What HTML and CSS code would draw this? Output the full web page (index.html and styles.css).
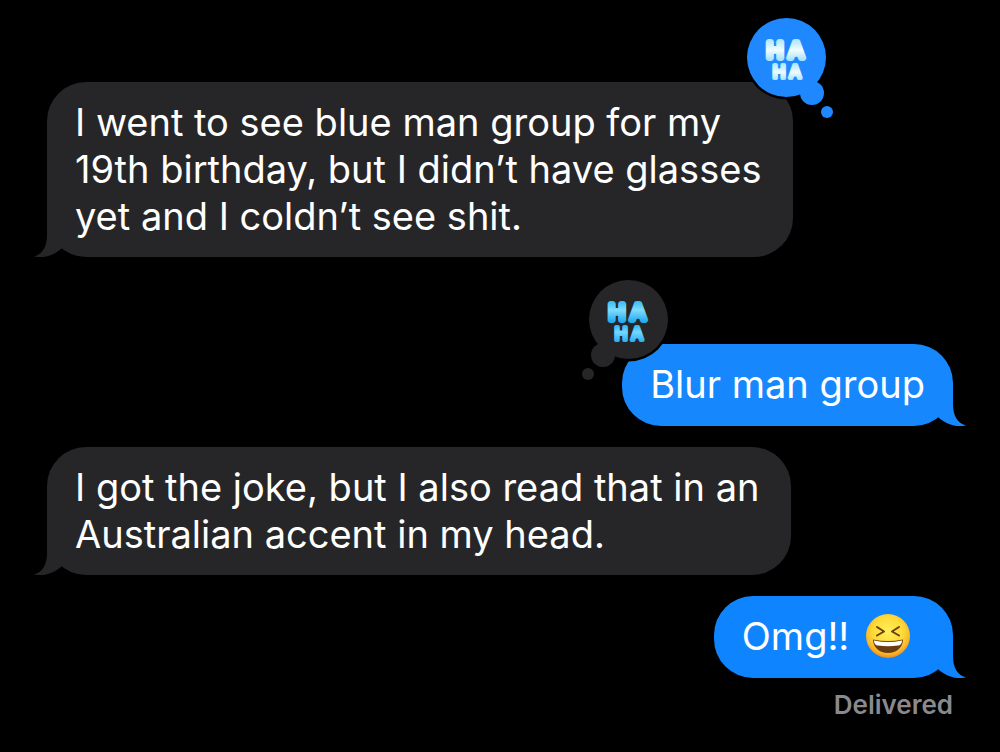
FILE: index.html
```html
<!DOCTYPE html>
<html lang="en">

<head>
  <meta charset="UTF-8">
  <meta name="viewport" content="width=device-width, initial-scale=1">
  <title>Messages</title>
  <link rel="stylesheet" href="styles.css">
</head>

<body>
  <main class="thread">
    <div class="message incoming">
      <p class="text">I went to see blue man group for my<br>19th birthday, but I didn’t have glasses<br>yet and I coldn’t see shit.</p>
      <svg class="tail" viewBox="0 0 28 39" aria-hidden="true">
        <path d="M13 0V17C13 28 9 36 0 38.5C10 40.500 20 37.500 28 30V0Z" />
      </svg>
      <svg class="reaction reaction-right" viewBox="0 0 92 106" role="img" aria-label="Ha ha">
        <defs>
          <linearGradient id="pale" gradientUnits="userSpaceOnUse" x1="0" y1="22" x2="0" y2="66">
            <stop offset="0" stop-color="#9fe0fb" />
            <stop offset="0.3" stop-color="#f2fcff" />
            <stop offset="0.52" stop-color="#a5e2fa" />
            <stop offset="0.58" stop-color="#a5e2fa" />
            <stop offset="0.8" stop-color="#effbff" />
            <stop offset="1" stop-color="#9fe0fb" />
          </linearGradient>
        </defs>
        <circle class="ring" cx="42.5" cy="42.5" r="42" />
        <g class="cloud-blue">
          <circle cx="42.5" cy="42.5" r="39.5" />
          <circle cx="68" cy="78" r="12" />
          <circle cx="83" cy="97" r="6" />
        </g>
        <text class="haha" fill="url(#pale)" stroke="url(#pale)"><tspan class="ha-big" x="31 52" y="43">HA</tspan><tspan class="ha-small" x="35 51" y="63">HA</tspan></text>
      </svg>
    </div>

    <div class="message outgoing spaced">
      <p class="text">Blur man group</p>
      <svg class="tail" viewBox="0 0 28 39" aria-hidden="true">
        <path d="M13 0V17C13 28 9 36 0 38.5C10 40.500 20 37.500 28 30V0Z" />
      </svg>
      <svg class="reaction reaction-left" viewBox="0 0 92 106" role="img" aria-label="Ha ha">
        <defs>
          <linearGradient id="bright" gradientUnits="userSpaceOnUse" x1="0" y1="22" x2="0" y2="66">
            <stop offset="0" stop-color="#25b4f4" />
            <stop offset="0.25" stop-color="#7fdcff" />
            <stop offset="0.52" stop-color="#20aaf0" />
            <stop offset="0.58" stop-color="#25b4f4" />
            <stop offset="0.75" stop-color="#74d8ff" />
            <stop offset="1" stop-color="#20aaf0" />
          </linearGradient>
        </defs>
        <circle class="ring" cx="49.5" cy="42.5" r="42" />
        <g class="cloud-grey">
          <circle cx="49.5" cy="42.5" r="39.5" />
          <circle cx="24" cy="78" r="12" />
          <circle cx="9" cy="97" r="6" />
        </g>
        <text class="haha" fill="url(#bright)" stroke="url(#bright)"><tspan class="ha-big" x="38 59" y="43">HA</tspan><tspan class="ha-small" x="42 58" y="63">HA</tspan></text>
      </svg>
    </div>

    <div class="message incoming">
      <p class="text">I got the joke, but I also read that in an<br>Australian accent in my head.</p>
      <svg class="tail" viewBox="0 0 28 39" aria-hidden="true">
        <path d="M13 0V17C13 28 9 36 0 38.5C10 40.500 20 37.500 28 30V0Z" />
      </svg>
    </div>

    <div class="message outgoing latest">
      <p class="text">Omg!!
        <svg class="emoji" viewBox="0 0 44 44" role="img" aria-label="Laughing face">
          <defs>
            <radialGradient id="face" cx="0.5" cy="0.4" r="0.6">
              <stop offset="0" stop-color="#fff05a" />
              <stop offset="0.6" stop-color="#fdd835" />
              <stop offset="0.85" stop-color="#f8b52c" />
              <stop offset="1" stop-color="#ec8a1d" />
            </radialGradient>
          </defs>
          <circle cx="22" cy="22" r="22" fill="url(#face)" />
          <path d="M11 13L18 17.5L11 21.500M33 13L26 17.500L33 21.500" fill="none" stroke="#6b3f0c" stroke-width="2" stroke-linecap="round" stroke-linejoin="round" />
          <path d="M7 25.500Q22 28.500 37 25.500C37 33 31 39 22 39C13 39 7 33 7 25.500Z" fill="#6a3d10" />
          <path d="M8 26.500Q22 29.500 36 26.500C36 30 34 31.500 32 31.500Q22 33 12 31.500C10 31.500 8 30 8 26.500Z" fill="#fff" />
        </svg>
      </p>
      <svg class="tail" viewBox="0 0 28 39" aria-hidden="true">
        <path d="M13 0V17C13 28 9 36 0 38.5C10 40.500 20 37.500 28 30V0Z" />
      </svg>
    </div>
    <p class="status">Delivered</p>
  </main>
</body>

</html>
```
FILE: styles.css
```css
body {
  margin: 0;
  background: #000;
  color: #fff;
  font-family: Inter, "Liberation Sans", sans-serif;
}

.thread {
  display: flex;
  flex-direction: column;
  gap: 21px;
  padding: 82px 47px 0;
}

.message {
  position: relative;
  border-radius: 39px;
  background: var(--bubble);
}

.incoming {
  --bubble: #262628;
  align-self: flex-start;
  padding: 17px 32px 17px 28px;
}

.outgoing {
  --bubble: #1787fe;
  align-self: flex-end;
  padding: 17px 28px 18px;
}

.latest {
  --bubble: #0f84ff;
}

/* leaves room for the reaction above the bubble */
.spaced {
  margin-top: 66px;
}

.text {
  margin: 0;
  font-size: 38px;
  line-height: 47px;
}

.tail {
  position: absolute;
  bottom: 0;
  left: -13px;
  width: 28px;
  height: 39px;
  fill: var(--bubble);
}

.outgoing .tail {
  left: auto;
  right: -13px;
  transform: scaleX(-1);
}

.reaction {
  position: absolute;
  top: -67px;
  width: 92px;
  height: 106px;
}

.reaction-right {
  right: -43px;
}

.reaction-left {
  left: -43px;
}

.ring {
  fill: #000;
}

.cloud-blue {
  fill: #2088ff;
}

.cloud-grey {
  fill: #262628;
}

.haha {
  font-weight: 400;
  text-anchor: middle;
  stroke-linejoin: round;
}

.ha-big {
  font-size: 22px;
  stroke-width: 6px;
}

.ha-small {
  font-size: 17px;
  stroke-width: 4px;
}

.emoji {
  width: 44px;
  height: 44px;
  margin: 0 15px 0 6px;
  vertical-align: -8px;
}

.status {
  align-self: flex-end;
  margin: -8px 0 0;
  color: #8a8a8e;
  font-size: 26px;
  font-weight: 600;
  line-height: 28px;
}
```
